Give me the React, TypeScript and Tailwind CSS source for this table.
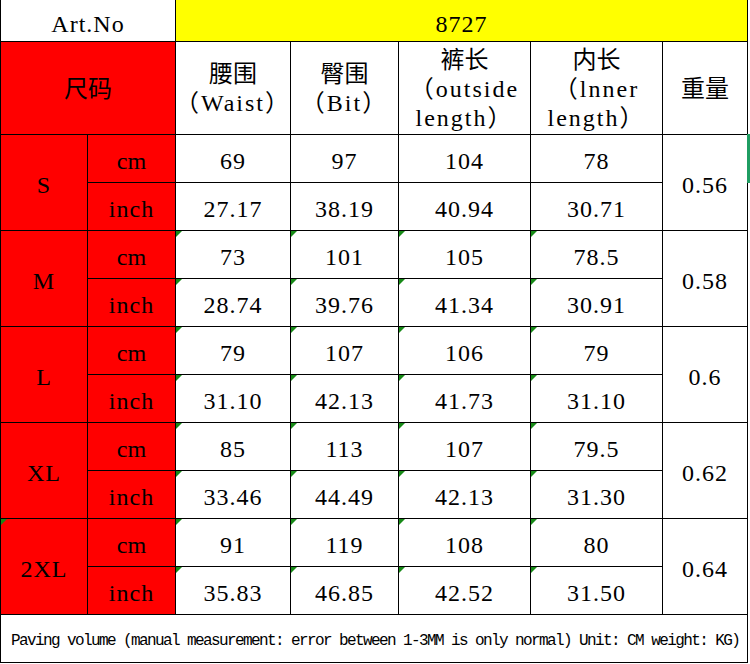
import React from "react";

type Row = {
  s: string;
  cm: string[];
  inch: string[];
  w: string;
  tri: boolean;
  labelTri?: boolean;
};

const rows: Row[] = [
  { s: "S", cm: ["69", "97", "104", "78"], inch: ["27.17", "38.19", "40.94", "30.71"], w: "0.56", tri: false },
  { s: "M", cm: ["73", "101", "105", "78.5"], inch: ["28.74", "39.76", "41.34", "30.91"], w: "0.58", tri: true },
  { s: "L", cm: ["79", "107", "106", "79"], inch: ["31.10", "42.13", "41.73", "31.10"], w: "0.6", tri: true },
  { s: "XL", cm: ["85", "113", "107", "79.5"], inch: ["33.46", "44.49", "42.13", "31.30"], w: "0.62", tri: true },
  { s: "2XL", cm: ["91", "119", "108", "80"], inch: ["35.83", "46.85", "42.52", "31.50"], w: "0.64", tri: true, labelTri: true },
];

const Tri = () => (
  <span className="absolute left-0 top-0 w-0 h-0 border-t-[6px] border-r-[6px] border-t-[#178a17] border-r-transparent" />
);

const cell = "relative border-r border-b border-black flex items-center justify-center";

export default function App() {
  return (
    <div className="w-[750px] h-[664px] bg-white">
      <div className="relative w-[748px]">
        <div className="grid grid-cols-[87px_88px_115px_108px_132px_132px_85px] grid-rows-[42px_93px_repeat(11,48px)] border-l border-black font-['Liberation_Serif','Noto_Sans_CJK_SC',serif] text-[24px] text-black leading-normal tracking-[1px]">
          <div className={`${cell} col-span-2 bg-white pt-[6px]`}>Art.No</div>
          <div className={`${cell} col-span-5 bg-[#ffff00] pt-[6px]`}>8727</div>

          <div className={`${cell} col-span-2 bg-[#ff0000] pt-[2px] tracking-normal`}>尺码</div>
          <div className={`${cell} flex-col leading-[29px] pt-[2px]`}>
            <div className="tracking-normal">腰围</div>
            <div className="tracking-[2px]">（Waist）</div>
          </div>
          <div className={`${cell} flex-col leading-[29px] pt-[2px]`}>
            <div className="tracking-normal">臀围</div>
            <div className="tracking-[2px]">（Bit）</div>
          </div>
          <div className={`${cell} flex-col leading-[29px] pt-[2px]`}>
            <div className="tracking-normal">裤长</div>
            <div className="tracking-[2px]">（outside</div>
            <div className="tracking-[2px]">length）</div>
          </div>
          <div className={`${cell} flex-col leading-[29px] pt-[2px]`}>
            <div className="tracking-normal">内长</div>
            <div className="tracking-[2px]">（lnner</div>
            <div className="tracking-[2px]">length）</div>
          </div>
          <div className={`${cell} pt-[2px] tracking-normal`}>重量</div>

          {rows.map((r) => (
            <React.Fragment key={r.s}>
              <div className={`${cell} row-span-2 bg-[#ff0000] pt-[5px]`}>
                {r.labelTri && <Tri />}
                {r.s}
              </div>
              <div className={`${cell} bg-[#ff0000] pt-[5px] tracking-normal`}>cm</div>
              {r.cm.map((v, i) => (
                <div key={"c" + i} className={`${cell} pt-[5px]`}>
                  {r.tri && <Tri />}
                  {v}
                </div>
              ))}
              <div className={`${cell} row-span-2 pt-[5px]`}>{r.w}</div>
              <div className={`${cell} bg-[#ff0000] pt-[5px]`}>inch</div>
              {r.inch.map((v, i) => (
                <div key={"i" + i} className={`${cell} pt-[5px]`}>
                  {r.tri && <Tri />}
                  {v}
                </div>
              ))}
            </React.Fragment>
          ))}

          <div className={`${cell} col-span-7 justify-start pl-[10px] pt-[4px] font-['Liberation_Mono',monospace] text-[16px] tracking-[-1.6px] whitespace-nowrap`}>
            Paving volume (manual measurement: error between 1-3MM is only normal) Unit: CM weight: KG)
          </div>
        </div>
        <div className="absolute left-[747px] top-[134px] w-[3px] h-[49px] bg-[#1f9d62]" />
      </div>
    </div>
  );
}
